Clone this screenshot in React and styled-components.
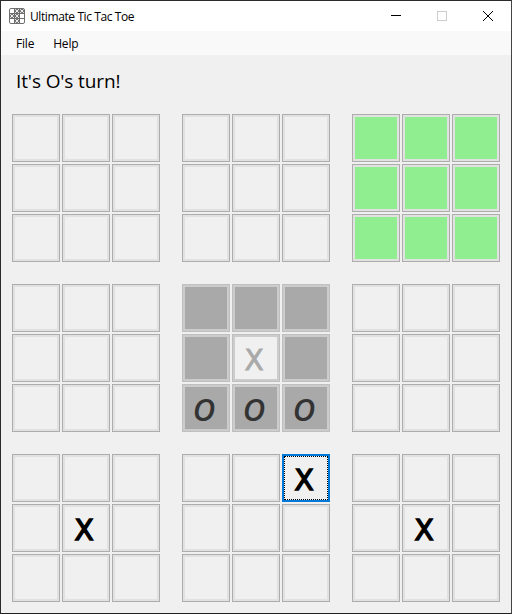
import React from "react";
import styled, { createGlobalStyle } from "styled-components";

const Global = createGlobalStyle`
  html, body { margin: 0; padding: 0; background: #f0f0f0; }
  body { width: 512px; height: 614px; overflow: hidden; font-family: "Open Sans", "Noto Sans", sans-serif; }
`;

const Window = styled.div`
  box-sizing: border-box;
  width: 512px;
  height: 614px;
  border: 1px solid #2b2b2b;
  border-bottom-color: #222;
  border-right-color: #444;
  background: #f0f0f0;
  display: flex;
  flex-direction: column;
`;

const TitleBar = styled.div`
  height: 30px;
  flex: none;
  background: #fff;
  display: flex;
  align-items: center;
`;

const AppIcon = styled.svg`
  width: 16px;
  height: 16px;
  margin-left: 8px;
  flex: none;
`;

const Title = styled.div`
  margin-left: 5px;
  font-size: 12px;
  letter-spacing: -0.4px;
  color: #000;
  flex: 1;
`;

const WinButton = styled.div`
  width: 46px;
  height: 30px;
  display: flex;
  align-items: center;
  justify-content: center;
  flex: none;
`;

const MenuBar = styled.div`
  height: 24px;
  flex: none;
  background: #f9f9f9;
  display: flex;
  align-items: center;
  padding-left: 8px;
  gap: 5px;
`;

const MenuItem = styled.div`
  font-size: 12px;
  letter-spacing: -0.2px;
  color: #000;
  padding: 0 7px;
`;

const Status = styled.div`
  font-size: 19px;
  line-height: 26px;
  letter-spacing: -0.12px;
  color: #000;
  padding: 13px 0 0 15px;
  height: 32px;
`;

const Boards = styled.div`
  display: grid;
  grid-template-columns: repeat(3, 148px);
  grid-auto-rows: 148px;
  gap: 22px;
  padding: 14px 0 0 11px;
`;

const Board = styled.div`
  display: grid;
  grid-template-columns: repeat(3, 48px);
  grid-auto-rows: 48px;
  gap: 2px;
`;

const faces = { won: "#90ee90", dead: "#a9a9a9", live: "#f0f0f0" };

const Cell = styled.div`
  box-sizing: border-box;
  border: 1px solid ${(p) => (p.$focus ? "#0078d7" : p.$disabled ? "#bfbfbf" : "#adadad")};
  background: ${(p) => faces[p.$tone]};
  box-shadow: inset 0 0 0 ${(p) => (p.$focus ? "1px #0078d7" : `2px ${p.$disabled ? "#cccccc" : "#e1e1e1"}`)};
  display: flex;
  align-items: center;
  justify-content: center;
  position: relative;
  padding: 2px 4px 0 0;
`;

const FocusRing = styled.div`
  position: absolute;
  inset: 1px;
  border: 1px dotted #000;
`;

const MarkText = styled.span`
  font-family: ${(p) => (p.$mark === "X" ? '"DejaVu Sans"' : '"Open Sans"')}, sans-serif;
  font-size: ${(p) => (p.$mark === "X" ? 28 : 31)}px;
  line-height: 1;
  margin-top: ${(p) => (p.$mark === "X" ? 3 : 0)}px;
  font-weight: ${(p) => (p.$mark === "X" ? 400 : 600)};
  font-style: ${(p) => (p.$mark === "O" ? "italic" : "normal")};
  color: ${(p) => p.$color};
  -webkit-text-stroke: ${(p) => p.$stroke}px ${(p) => p.$color};
`;

const blank = Array(9).fill(null);
const at = (o) => blank.map((_, i) => o[i] || null);

const O = { m: "O", c: "#333", s: 0 };
const X = { m: "X", c: "#000", s: 1.4 };

const boards = [
  { cells: blank },
  { cells: blank },
  { cells: blank, tone: "won" },
  { cells: blank },
  {
    tone: "dead",
    cells: at({ 4: { m: "X", c: "#a9a9a9", s: 0.8, bright: true }, 6: O, 7: O, 8: O }),
  },
  { cells: blank },
  { cells: at({ 4: X }) },
  { cells: at({ 2: { ...X, focus: true } }) },
  { cells: at({ 4: X }) },
];

export default function App() {
  return (
    <Window>
      <Global />
      <TitleBar>
        <AppIcon viewBox="0 0 16 16" fill="none" stroke="#6e6e6e" strokeWidth="1">
          <rect x="0.5" y="0.5" width="15" height="15" rx="1.5" />
          <path d="M5.5 .5v15M10.5 .5v15M.5 5.5h15M.5 10.5h15" />
          <circle cx="8" cy="3" r="1.6" />
          <circle cx="13" cy="3" r="1.6" />
          <circle cx="3" cy="8" r="1.6" />
          <circle cx="8" cy="8" r="1.6" />
          <circle cx="8" cy="13" r="1.6" />
        </AppIcon>
        <Title>Ultimate Tic Tac Toe</Title>
        <WinButton>
          <svg width="10" height="10" viewBox="0 0 10 10"><path d="M0 4.5h10" stroke="#000" /></svg>
        </WinButton>
        <WinButton>
          <svg width="10" height="10" viewBox="0 0 10 10"><rect x=".5" y=".5" width="9" height="9" fill="none" stroke="#ccc" /></svg>
        </WinButton>
        <WinButton>
          <svg width="10" height="10" viewBox="0 0 10 10"><path d="M0 0l10 10M10 0L0 10" stroke="#000" /></svg>
        </WinButton>
      </TitleBar>
      <MenuBar>
        <MenuItem>File</MenuItem>
        <MenuItem>Help</MenuItem>
      </MenuBar>
      <Status>It's O's turn!</Status>
      <Boards>
        {boards.map((b, i) => (
          <Board key={i}>
            {b.cells.map((c, j) => (
              <Cell key={j} $tone={c && c.bright ? "live" : b.tone || "live"} $disabled={b.tone === "dead"} $focus={c && c.focus}>
                {c && c.focus && <FocusRing />}
                {c && <MarkText $mark={c.m} $color={c.c} $stroke={c.s}>{c.m}</MarkText>}
              </Cell>
            ))}
          </Board>
        ))}
      </Boards>
    </Window>
  );
}
